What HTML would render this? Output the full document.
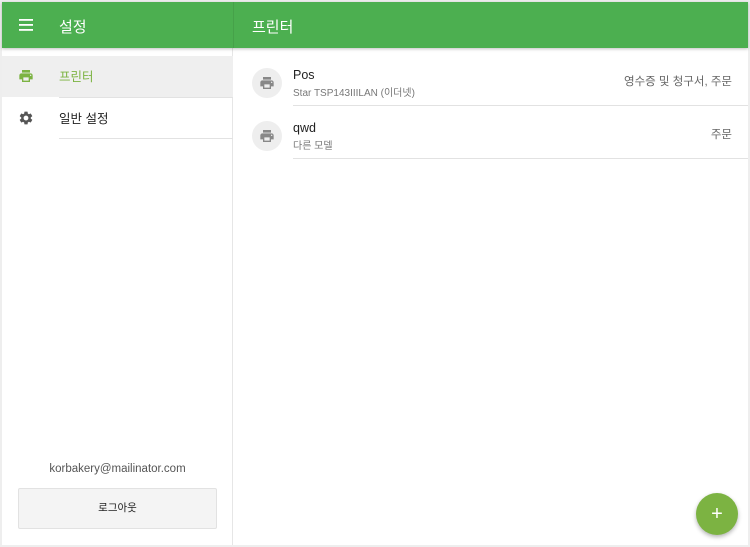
<!DOCTYPE html>
<html><head><meta charset="utf-8"><style>
*{margin:0;padding:0;box-sizing:border-box}
body{width:750px;height:547px;background:#eeeeee;font-family:"Liberation Sans","Noto Sans CJK KR",sans-serif;position:relative;overflow:hidden}
.app{position:absolute;left:2px;top:2px;width:746px;height:543px;background:#fff}
.hdr{position:absolute;left:0;top:0;width:746px;height:46px;background:#4caf50;box-shadow:0 1px 3px rgba(0,0,0,.25)}
.hdr .t{position:absolute;top:14px;color:#fff;font-size:15px}
.left{position:absolute;left:0;top:46px;width:231px;height:497px;border-right:1px solid #e6e6e6}
.item{position:absolute;left:0;width:231px;height:41px}
.item .l{position:absolute;left:57px;top:10px;font-size:12.5px;color:#222}
.item .ic{position:absolute;left:16px;top:12px}
.sep{position:absolute;left:57px;width:174px;height:1px;background:#e2e2e2}
.row{position:absolute;left:232px;width:514px;height:52px}
.row .c{position:absolute;left:18px;top:14px;width:30px;height:30px;border-radius:50%;background:#eeeeee}
.row .c svg{position:absolute;left:7px;top:7px}
.row .n{position:absolute;left:59px;top:14px;font-size:12.5px;color:#222}
.row .s{position:absolute;left:59px;top:30px;font-size:10px;color:#777}
.row .r{position:absolute;right:16px;top:19px;font-size:11.5px;color:#666}
.row .b{position:absolute;left:59px;bottom:0;right:0;height:1px;background:#e2e2e2}
</style></head><body><div class="app">
<div class="left">
<div class="item" style="top:8px;background:#efefef"><svg class="ic" width="16" height="16" viewBox="0 0 24 24"><path fill="#7cb342" d="M19 8H5c-1.66 0-3 1.34-3 3v6h4v4h12v-4h4v-6c0-1.66-1.34-3-3-3zm-3 11H8v-5h8v5zm3-7c-.55 0-1-.45-1-1s.45-1 1-1 1 .45 1 1-.45 1-1 1zm-1-9H6v4h12V3z"/></svg><span class="l" style="color:#7cb342">프린터</span></div>
<div class="sep" style="top:49px"></div>
<div class="item" style="top:50px"><svg class="ic" width="16" height="16" viewBox="0 0 24 24"><path fill="#555" d="M19.14 12.94c.04-.3.06-.61.06-.94 0-.32-.02-.64-.07-.94l2.030-1.58a.49.49 0 00.12-.61l-1.92-3.32a.488.488 0 00-.59-.22l-2.39.96c-.5-.38-1.030-.7-1.62-.94l-.36-2.54a.484.484 0 00-.48-.41h-3.84c-.24 0-.43.17-.47.41l-.36 2.54c-.59.24-1.13.57-1.62.94l-2.39-.96a.48.48 0 00-.59.22L2.74 8.87c-.12.21-.08.47.12.61l2.03 1.58c-.05.3-.09.63-.09.94s.02.64.07.94l-2.03 1.58a.49.49 0 00-.12.61l1.92 3.32c.12.22.37.29.59.22l2.39-.96c.5.38 1.03.7 1.62.94l.36 2.54c.05.24.24.41.48.41h3.84c.24 0 .44-.17.47-.41l.36-2.54c.59-.24 1.13-.56 1.62-.94l2.39.96c.22.08.47 0 .59-.22l1.92-3.32c.12-.22.07-.47-.12-.61l-2.01-1.58zM12 15.6c-1.98 0-3.6-1.62-3.6-3.6s1.62-3.6 3.6-3.6 3.6 1.62 3.6 3.6-1.62 3.6-3.6 3.6z"/></svg><span class="l">일반 설정</span></div>
<div class="sep" style="top:90px"></div>
<div style="position:absolute;left:0;width:231px;top:415px;text-align:center;font-size:11.5px;color:#555">korbakery@mailinator.com</div>
<div style="position:absolute;left:16px;top:440px;width:199px;height:41px;background:#f4f4f4;border:1px solid #e2e2e2;border-radius:2px;text-align:center;line-height:39px;font-size:10.5px;color:#222">로그아웃</div>
</div>
<div class="row" style="top:52px"><div class="c"><svg width="16" height="16" viewBox="0 0 24 24"><path fill="#888" d="M19 8H5c-1.66 0-3 1.34-3 3v6h4v4h12v-4h4v-6c0-1.66-1.34-3-3-3zm-3 11H8v-5h8v5zm3-7c-.55 0-1-.45-1-1s.45-1 1-1 1 .45 1 1-.45 1-1 1zm-1-9H6v4h12V3z"/></svg></div><span class="n">Pos</span><span class="s">Star TSP143IIILAN (이더넷)</span><span class="r">영수증 및 청구서, 주문</span><div class="b"></div></div>
<div class="row" style="top:105px"><div class="c"><svg width="16" height="16" viewBox="0 0 24 24"><path fill="#888" d="M19 8H5c-1.66 0-3 1.34-3 3v6h4v4h12v-4h4v-6c0-1.66-1.34-3-3-3zm-3 11H8v-5h8v5zm3-7c-.55 0-1-.45-1-1s.45-1 1-1 1 .45 1 1-.45 1-1 1zm-1-9H6v4h12V3z"/></svg></div><span class="n">qwd</span><span class="s">다른 모델</span><span class="r">주문</span><div class="b"></div></div>
<div class="hdr">
<svg style="position:absolute;left:17px;top:17px" width="14" height="12" viewBox="0 0 14 12"><rect y="0" width="14" height="1.8" fill="#fff"/><rect y="5" width="14" height="1.8" fill="#fff"/><rect y="10" width="14" height="1.8" fill="#fff"/></svg>
<span class="t" style="left:57px">설정</span>
<div style="position:absolute;left:231px;top:0;width:1px;height:46px;background:rgba(0,0,0,.08)"></div>
<span class="t" style="left:250px">프린터</span>
</div>
<div style="position:absolute;left:694px;top:491px;width:42px;height:42px;border-radius:50%;background:#7cb342;box-shadow:0 2px 4px rgba(0,0,0,.3);color:#fff;text-align:center;line-height:42px;font-size:20px">+</div>
</div></body></html>
